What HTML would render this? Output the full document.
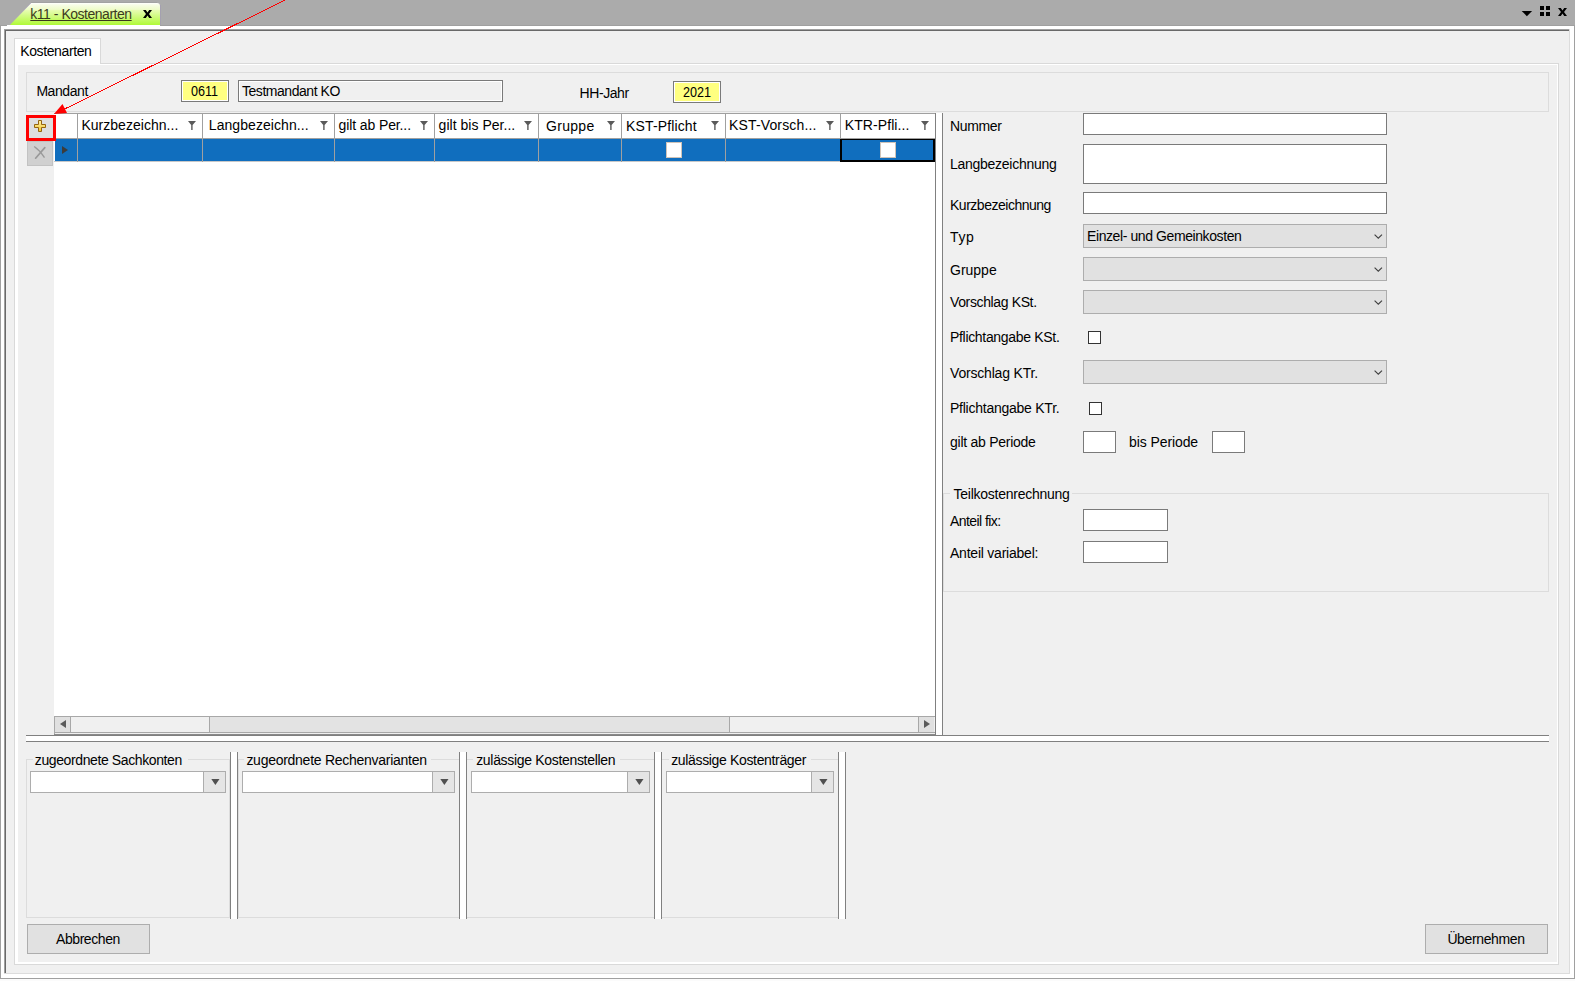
<!DOCTYPE html><html><head><meta charset="utf-8"><style>
html,body{margin:0;padding:0;}
body{width:1575px;height:981px;position:relative;overflow:hidden;background:#ababab;font-family:"Liberation Sans",sans-serif;color:#000;}
body>div{position:absolute;}
.t{position:absolute;white-space:nowrap;line-height:16px;font-size:13.5px;}
</style></head><body>
<div style="left:0px;top:25px;width:1575px;height:956px;background:#a0a0a0"></div>
<div style="left:1px;top:26px;width:1573px;height:953px;background:#fff"></div>
<div style="left:7px;top:25px;width:153px;height:1px;background:#fff"></div>
<div style="left:4px;top:29px;width:2px;height:945px;background:#a0a0a0"></div>
<div style="left:5px;top:30px;width:1px;height:944px;background:#696969"></div>
<div style="left:4px;top:29px;width:1566px;height:1px;background:#a0a0a0"></div>
<div style="left:5px;top:30px;width:1565px;height:1px;background:#696969"></div>
<div style="left:6px;top:31px;width:1563px;height:942px;background:#f0f0f0"></div>
<div style="left:1569px;top:29px;width:1px;height:945px;background:#dcdcdc"></div>
<div style="left:4px;top:973px;width:1566px;height:1px;background:#dcdcdc"></div>
<div style="left:0px;top:978px;width:1575px;height:1px;background:#a0a0a0"></div>
<div style="left:0px;top:979px;width:1575px;height:2px;background:#fbfbfb"></div>
<div style="left:0px;top:25px;width:1px;height:952px;background:#a0a0a0"></div>
<div style="left:1574px;top:25px;width:1px;height:952px;background:#a0a0a0"></div>
<svg style="position:absolute;left:0;top:0" width="170" height="26"><defs><linearGradient id="tg" x1="0" y1="0" x2="0" y2="1"><stop offset="0" stop-color="#ffffff"/><stop offset="0.08" stop-color="#f8fde8"/><stop offset="0.3" stop-color="#eefcc8"/><stop offset="0.34" stop-color="#e6fcb0"/><stop offset="1" stop-color="#b0fa38"/></linearGradient></defs><path d="M9.5,25 L31,3 L157,3 Q160,3 160,6 L160,25 Z" fill="url(#tg)"/><path d="M9.5,25 L31,3" stroke="#a89cc0" stroke-width="0.6" fill="none"/><rect x="160" y="5" width="1" height="20" fill="#a4a0b0"/><rect x="31" y="2" width="126" height="1" fill="#a2a2a2"/></svg>
<div class="t" style="left:30.3px;top:6px;font-size:14px;color:#3c3a1e;text-decoration:underline;letter-spacing:-0.478px;">k11 - Kostenarten</div>
<svg style="position:absolute;left:143px;top:10px" width="9" height="8"><path d="M0,0 L2.8,0 L4.5,2.6 L6.2,0 L9,0 L6,4 L9,8 L6.2,8 L4.5,5.4 L2.8,8 L0,8 L3,4 Z" fill="#000"/></svg>
<svg style="position:absolute;left:1521px;top:11px" width="12" height="6"><path d="M0.7,0 L11.1,0 L5.9,5.2 Z" fill="#000"/></svg>
<div style="left:1540px;top:6px;width:4px;height:4px;background:#000"></div>
<div style="left:1546px;top:6px;width:4px;height:4px;background:#000"></div>
<div style="left:1540px;top:12px;width:4px;height:4px;background:#000"></div>
<div style="left:1546px;top:12px;width:4px;height:4px;background:#000"></div>
<svg style="position:absolute;left:1558px;top:8px" width="9" height="8"><path d="M0,0 L2.8,0 L4.5,2.6 L6.2,0 L9,0 L6,4 L9,8 L6.2,8 L4.5,5.4 L2.8,8 L0,8 L3,4 Z" fill="#000"/></svg>
<div style="left:14px;top:38px;width:87px;height:27px;background:#fff;box-sizing:border-box;border:1px solid #d9d9d9;border-bottom:none"></div>
<div style="left:14px;top:63px;width:1px;height:902px;background:#d9d9d9"></div>
<div style="left:100px;top:63px;width:1459px;height:1px;background:#d9d9d9"></div>
<div style="left:1558px;top:63px;width:1px;height:902px;background:#d9d9d9"></div>
<div style="left:14px;top:964px;width:1545px;height:1px;background:#d9d9d9"></div>
<div style="left:15px;top:64px;width:1543px;height:900px;background:#fff"></div>
<div style="left:18px;top:65px;width:1539px;height:897px;background:#f0f0f0"></div>
<div style="left:15px;top:64px;width:85px;height:1px;background:#fff"></div>
<div class="t" style="left:20.2px;top:43px;font-size:14px;letter-spacing:-0.38px;">Kostenarten</div>
<div style="left:26px;top:72px;width:1523px;height:40px;box-sizing:border-box;border:1px solid #dcdcdc;"></div>
<div class="t" style="left:36.4px;top:83px;font-size:14px;letter-spacing:-0.434px;">Mandant</div>
<div style="left:181px;top:80px;width:48px;height:22px;box-sizing:border-box;border:1px solid #7a7a7a;background:#ffff80;"></div>
<div style="left:182px;top:81px;width:46px;height:20px;box-sizing:border-box;border:1px solid #fff"></div>
<div class="t" style="left:191px;top:83px;font-size:14px;transform:scaleX(0.9);transform-origin:0 0;">0611</div>
<div style="left:238px;top:80px;width:265px;height:22px;box-sizing:border-box;border:1px solid #7a7a7a;background:#f0f0f0;"></div>
<div style="left:239px;top:81px;width:263px;height:20px;box-sizing:border-box;border:1px solid #fff"></div>
<div class="t" style="left:242.0px;top:83px;font-size:14px;letter-spacing:-0.461px;">Testmandant KO</div>
<div class="t" style="left:579.6px;top:85px;font-size:14px;letter-spacing:-0.433px;">HH-Jahr</div>
<div style="left:673px;top:81px;width:48px;height:22px;box-sizing:border-box;border:1px solid #7a7a7a;background:#ffff80;"></div>
<div style="left:674px;top:82px;width:46px;height:20px;box-sizing:border-box;border:1px solid #fff"></div>
<div class="t" style="left:683px;top:84px;font-size:14px;transform:scaleX(0.9);transform-origin:0 0;">2021</div>
<div style="left:54px;top:113px;width:881px;height:622px;background:#fff"></div>
<div style="left:54px;top:113px;width:881px;height:1px;background:#a0a0a0"></div>
<div style="left:54px;top:138px;width:881px;height:1px;background:#a0a0a0"></div>
<div style="left:55px;top:139px;width:880px;height:22px;background:#106ebe"></div>
<div style="left:54px;top:161px;width:881px;height:1px;background:#c8c8c8"></div>
<div style="left:77px;top:114px;width:1px;height:48px;background:#a0a0a0"></div>
<div style="left:202px;top:114px;width:1px;height:48px;background:#a0a0a0"></div>
<div style="left:334px;top:114px;width:1px;height:48px;background:#a0a0a0"></div>
<div style="left:434px;top:114px;width:1px;height:48px;background:#a0a0a0"></div>
<div style="left:538px;top:114px;width:1px;height:48px;background:#a0a0a0"></div>
<div style="left:621px;top:114px;width:1px;height:48px;background:#a0a0a0"></div>
<div style="left:725px;top:114px;width:1px;height:48px;background:#a0a0a0"></div>
<div style="left:840px;top:114px;width:1px;height:48px;background:#a0a0a0"></div>
<div class="t" style="left:81.4px;top:117px;font-size:14px;letter-spacing:0.028px;">Kurzbezeichn...</div>
<svg style="position:absolute;left:188px;top:121px" width="8" height="9"><path d="M0,0 L8,0 L4.6,4 L4.6,9 L3.2,9 L3.2,4 Z" fill="#5a5a5a"/></svg>
<div class="t" style="left:208.8px;top:117px;font-size:14px;letter-spacing:0.071px;">Langbezeichn...</div>
<svg style="position:absolute;left:320px;top:121px" width="8" height="9"><path d="M0,0 L8,0 L4.6,4 L4.6,9 L3.2,9 L3.2,4 Z" fill="#5a5a5a"/></svg>
<div class="t" style="left:338.6px;top:117px;font-size:14px;letter-spacing:-0.116px;">gilt ab Per...</div>
<svg style="position:absolute;left:420px;top:121px" width="8" height="9"><path d="M0,0 L8,0 L4.6,4 L4.6,9 L3.2,9 L3.2,4 Z" fill="#5a5a5a"/></svg>
<div class="t" style="left:438.6px;top:117px;font-size:14px;letter-spacing:0.028px;">gilt bis Per...</div>
<svg style="position:absolute;left:524px;top:121px" width="8" height="9"><path d="M0,0 L8,0 L4.6,4 L4.6,9 L3.2,9 L3.2,4 Z" fill="#5a5a5a"/></svg>
<div class="t" style="left:546px;top:118px;font-size:14px;letter-spacing:0.3px;">Gruppe</div>
<svg style="position:absolute;left:607px;top:121px" width="8" height="9"><path d="M0,0 L8,0 L4.6,4 L4.6,9 L3.2,9 L3.2,4 Z" fill="#5a5a5a"/></svg>
<div class="t" style="left:626.0px;top:118px;font-size:14px;letter-spacing:0.14px;">KST-Pflicht</div>
<svg style="position:absolute;left:711px;top:121px" width="8" height="9"><path d="M0,0 L8,0 L4.6,4 L4.6,9 L3.2,9 L3.2,4 Z" fill="#5a5a5a"/></svg>
<div class="t" style="left:729.0px;top:117px;font-size:14px;letter-spacing:0.15px;">KST-Vorsch...</div>
<svg style="position:absolute;left:826px;top:121px" width="8" height="9"><path d="M0,0 L8,0 L4.6,4 L4.6,9 L3.2,9 L3.2,4 Z" fill="#5a5a5a"/></svg>
<div class="t" style="left:844.8px;top:117px;font-size:14px;letter-spacing:0.08px;">KTR-Pfli...</div>
<svg style="position:absolute;left:921px;top:121px" width="8" height="9"><path d="M0,0 L8,0 L4.6,4 L4.6,9 L3.2,9 L3.2,4 Z" fill="#5a5a5a"/></svg>
<svg style="position:absolute;left:62px;top:146px" width="6" height="8"><path d="M0,0 L6,4 L0,8 Z" fill="#3c3c3c"/></svg>
<div style="left:666px;top:142px;width:16px;height:16px;box-sizing:border-box;border:1px solid #cfc3b8;background:#fff;"></div>
<div style="left:880px;top:142px;width:16px;height:16px;box-sizing:border-box;border:1px solid #cfc3b8;background:#fff;"></div>
<div style="left:840px;top:139px;width:95px;height:23px;box-sizing:border-box;border:2px solid #000;border-top-width:1px"></div>
<div style="left:26px;top:115px;width:30px;height:26px;box-sizing:border-box;border:3px solid #f00;background:#dedede"></div>
<svg style="position:absolute;left:34px;top:120px" width="12" height="12"><defs><linearGradient id="pg" x1="0" y1="0" x2="0" y2="1"><stop offset="0" stop-color="#fff3a8"/><stop offset="1" stop-color="#f2c42c"/></linearGradient></defs><path d="M4.5,0.5 L7.5,0.5 L7.5,4.5 L11.5,4.5 L11.5,7.5 L7.5,7.5 L7.5,11.5 L4.5,11.5 L4.5,7.5 L0.5,7.5 L0.5,4.5 L4.5,4.5 Z" fill="url(#pg)" stroke="#94640e" stroke-width="1" stroke-linejoin="miter"/></svg>
<div style="left:27px;top:141px;width:26px;height:25px;box-sizing:border-box;border:1px solid #c2c2c2;background:#d0d0d0"></div>
<svg style="position:absolute;left:33px;top:145px" width="14" height="15"><path d="M1.2,1.5 Q7,5.5 11.5,12.6" stroke="#999" stroke-width="1.3" fill="none"/><path d="M11.8,2.6 L2.6,13.2" stroke="#999" stroke-width="1.7" stroke-linecap="round" fill="none"/></svg>
<div style="left:54px;top:716px;width:881px;height:18px;background:#f0f0f0"></div>
<div style="left:54px;top:716px;width:881px;height:1px;background:#a8a8a8"></div>
<div style="left:54px;top:732px;width:881px;height:1px;background:#a8a8a8"></div>
<div style="left:54px;top:734px;width:881px;height:1px;background:#8a8a8a"></div>
<div style="left:55px;top:717px;width:15px;height:15px;background:#e0e0e0"></div>
<div style="left:70px;top:717px;width:1px;height:15px;background:#a8a8a8"></div>
<div style="left:54px;top:716px;width:1px;height:18px;background:#a8a8a8"></div>
<svg style="position:absolute;left:60px;top:720px" width="6" height="8"><path d="M6,0 L0,4 L6,8 Z" fill="#5a5a5a"/></svg>
<div style="left:210px;top:717px;width:519px;height:15px;background:#e3e3e3"></div>
<div style="left:209px;top:717px;width:1px;height:15px;background:#a8a8a8"></div>
<div style="left:729px;top:717px;width:1px;height:15px;background:#a8a8a8"></div>
<div style="left:919px;top:717px;width:15px;height:15px;background:#e0e0e0"></div>
<div style="left:918px;top:717px;width:1px;height:15px;background:#a8a8a8"></div>
<svg style="position:absolute;left:924px;top:720px" width="6" height="8"><path d="M0,0 L6,4 L0,8 Z" fill="#5a5a5a"/></svg>
<div style="left:935px;top:113px;width:1px;height:623px;background:#808080"></div>
<div style="left:936px;top:113px;width:6px;height:622px;background:#fff"></div>
<div style="left:942px;top:113px;width:1px;height:623px;background:#808080"></div>
<div style="left:26px;top:735px;width:1523px;height:1px;background:#808080"></div>
<div style="left:26px;top:736px;width:1523px;height:5px;background:#fff"></div>
<div style="left:26px;top:741px;width:1523px;height:1px;background:#808080"></div>
<div class="t" style="left:950.0px;top:118px;font-size:14px;letter-spacing:-0.36px;">Nummer</div>
<div style="left:1083px;top:113px;width:304px;height:22px;box-sizing:border-box;border:1px solid #7a7a7a;background:#fff;"></div>
<div class="t" style="left:950.0px;top:156px;font-size:14px;letter-spacing:-0.272px;">Langbezeichnung</div>
<div style="left:1083px;top:144px;width:304px;height:40px;box-sizing:border-box;border:1px solid #7a7a7a;background:#fff;"></div>
<div class="t" style="left:950.0px;top:197px;font-size:14px;letter-spacing:-0.486px;">Kurzbezeichnung</div>
<div style="left:1083px;top:192px;width:304px;height:22px;box-sizing:border-box;border:1px solid #7a7a7a;background:#fff;"></div>
<div class="t" style="left:950.0px;top:229px;font-size:14px;letter-spacing:0.6px;">Typ</div>
<div style="left:1083px;top:224px;width:304px;height:24px;box-sizing:border-box;border:1px solid #adadad;background:#e1e1e1;"></div>
<svg style="position:absolute;left:1373.8px;top:233.7px" width="10" height="6"><path d="M0.6,0.6 L4.3,4.2 L8,0.6" stroke="#404040" stroke-width="1.15" fill="none"/></svg>
<div class="t" style="left:1087.0px;top:228px;font-size:14px;letter-spacing:-0.408px;">Einzel- und Gemeinkosten</div>
<div class="t" style="left:950px;top:262px;font-size:14px;">Gruppe</div>
<div style="left:1083px;top:257px;width:304px;height:24px;box-sizing:border-box;border:1px solid #adadad;background:#e1e1e1;"></div>
<svg style="position:absolute;left:1373.8px;top:266.7px" width="10" height="6"><path d="M0.6,0.6 L4.3,4.2 L8,0.6" stroke="#404040" stroke-width="1.15" fill="none"/></svg>
<div class="t" style="left:950.0px;top:294px;font-size:14px;letter-spacing:-0.369px;">Vorschlag KSt.</div>
<div style="left:1083px;top:290px;width:304px;height:24px;box-sizing:border-box;border:1px solid #adadad;background:#e1e1e1;"></div>
<svg style="position:absolute;left:1373.8px;top:299.7px" width="10" height="6"><path d="M0.6,0.6 L4.3,4.2 L8,0.6" stroke="#404040" stroke-width="1.15" fill="none"/></svg>
<div class="t" style="left:950.0px;top:329px;font-size:14px;letter-spacing:-0.318px;">Pflichtangabe KSt.</div>
<div style="left:1088px;top:331px;width:13px;height:13px;box-sizing:border-box;border:1px solid #333;background:#fff;"></div>
<div class="t" style="left:950.0px;top:365px;font-size:14px;letter-spacing:-0.184px;">Vorschlag KTr.</div>
<div style="left:1083px;top:360px;width:304px;height:24px;box-sizing:border-box;border:1px solid #adadad;background:#e1e1e1;"></div>
<svg style="position:absolute;left:1373.8px;top:369.7px" width="10" height="6"><path d="M0.6,0.6 L4.3,4.2 L8,0.6" stroke="#404040" stroke-width="1.15" fill="none"/></svg>
<div class="t" style="left:950.0px;top:400px;font-size:14px;letter-spacing:-0.247px;">Pflichtangabe KTr.</div>
<div style="left:1089px;top:402px;width:13px;height:13px;box-sizing:border-box;border:1px solid #333;background:#fff;"></div>
<div class="t" style="left:950.0px;top:434px;font-size:14px;letter-spacing:-0.257px;">gilt ab Periode</div>
<div style="left:1083px;top:431px;width:33px;height:22px;box-sizing:border-box;border:1px solid #7a7a7a;background:#fff;"></div>
<div class="t" style="left:1129.1px;top:434px;font-size:14px;letter-spacing:-0.1px;">bis Periode</div>
<div style="left:1212px;top:431px;width:33px;height:22px;box-sizing:border-box;border:1px solid #7a7a7a;background:#fff;"></div>
<div style="left:943px;top:493px;width:606px;height:99px;box-sizing:border-box;border:1px solid #dcdcdc;"></div>
<div style="left:950px;top:488px;width:122px;height:10px;background:#f0f0f0"></div>
<div class="t" style="left:953.6px;top:486px;font-size:14px;letter-spacing:-0.259px;">Teilkostenrechnung</div>
<div class="t" style="left:950.0px;top:513px;font-size:14px;letter-spacing:-0.56px;">Anteil fix:</div>
<div style="left:1083px;top:509px;width:85px;height:22px;box-sizing:border-box;border:1px solid #7a7a7a;background:#fff;"></div>
<div class="t" style="left:950.0px;top:545px;font-size:14px;letter-spacing:-0.226px;">Anteil variabel:</div>
<div style="left:1083px;top:541px;width:85px;height:22px;box-sizing:border-box;border:1px solid #7a7a7a;background:#fff;"></div>
<div style="left:26px;top:759px;width:204px;height:159px;box-sizing:border-box;border:1px solid #dcdcdc;"></div>
<div style="left:33px;top:755px;width:155px;height:10px;background:#f0f0f0"></div>
<div class="t" style="left:34.8px;top:752px;font-size:14px;letter-spacing:-0.391px;">zugeordnete Sachkonten</div>
<div style="left:30px;top:771px;width:196px;height:22px;box-sizing:border-box;border:1px solid #adadad;background:#fff;"></div>
<div style="left:203px;top:771px;width:23px;height:22px;box-sizing:border-box;border:1px solid #adadad;background:#e5e5e5;"></div>
<svg style="position:absolute;left:210.5px;top:779px" width="9" height="6"><path d="M0.3,0 L8.5,0 L4.4,6 Z" fill="#505050"/></svg>
<div style="left:238px;top:759px;width:222px;height:159px;box-sizing:border-box;border:1px solid #dcdcdc;"></div>
<div style="left:244px;top:755px;width:187px;height:10px;background:#f0f0f0"></div>
<div class="t" style="left:246.4px;top:752px;font-size:14px;letter-spacing:-0.269px;">zugeordnete Rechenvarianten</div>
<div style="left:242px;top:771px;width:213px;height:22px;box-sizing:border-box;border:1px solid #adadad;background:#fff;"></div>
<div style="left:432px;top:771px;width:23px;height:22px;box-sizing:border-box;border:1px solid #adadad;background:#e5e5e5;"></div>
<svg style="position:absolute;left:439.5px;top:779px" width="9" height="6"><path d="M0.3,0 L8.5,0 L4.4,6 Z" fill="#505050"/></svg>
<div style="left:466px;top:759px;width:189px;height:159px;box-sizing:border-box;border:1px solid #dcdcdc;"></div>
<div style="left:473px;top:755px;width:147px;height:10px;background:#f0f0f0"></div>
<div class="t" style="left:476.2px;top:752px;font-size:14px;letter-spacing:-0.318px;">zulässige Kostenstellen</div>
<div style="left:471px;top:771px;width:179px;height:22px;box-sizing:border-box;border:1px solid #adadad;background:#fff;"></div>
<div style="left:627px;top:771px;width:23px;height:22px;box-sizing:border-box;border:1px solid #adadad;background:#e5e5e5;"></div>
<svg style="position:absolute;left:634.5px;top:779px" width="9" height="6"><path d="M0.3,0 L8.5,0 L4.4,6 Z" fill="#505050"/></svg>
<div style="left:661px;top:759px;width:178px;height:159px;box-sizing:border-box;border:1px solid #dcdcdc;"></div>
<div style="left:669px;top:755px;width:142px;height:10px;background:#f0f0f0"></div>
<div class="t" style="left:671.2px;top:752px;font-size:14px;letter-spacing:-0.343px;">zulässige Kostenträger</div>
<div style="left:666px;top:771px;width:168px;height:22px;box-sizing:border-box;border:1px solid #adadad;background:#fff;"></div>
<div style="left:811px;top:771px;width:23px;height:22px;box-sizing:border-box;border:1px solid #adadad;background:#e5e5e5;"></div>
<svg style="position:absolute;left:818.5px;top:779px" width="9" height="6"><path d="M0.3,0 L8.5,0 L4.4,6 Z" fill="#505050"/></svg>
<div style="left:230px;top:752px;width:1px;height:167px;background:#808080"></div>
<div style="left:231px;top:752px;width:6px;height:167px;background:#fff"></div>
<div style="left:237px;top:752px;width:1px;height:167px;background:#808080"></div>
<div style="left:459px;top:752px;width:1px;height:167px;background:#808080"></div>
<div style="left:460px;top:752px;width:6px;height:167px;background:#fff"></div>
<div style="left:466px;top:752px;width:1px;height:167px;background:#808080"></div>
<div style="left:654px;top:752px;width:1px;height:167px;background:#808080"></div>
<div style="left:655px;top:752px;width:6px;height:167px;background:#fff"></div>
<div style="left:661px;top:752px;width:1px;height:167px;background:#808080"></div>
<div style="left:838px;top:752px;width:1px;height:167px;background:#808080"></div>
<div style="left:839px;top:752px;width:6px;height:167px;background:#fff"></div>
<div style="left:845px;top:752px;width:1px;height:167px;background:#808080"></div>
<div style="left:27px;top:924px;width:123px;height:30px;box-sizing:border-box;border:1px solid #adadad;background:#e1e1e1;"></div>
<div class="t" style="left:56.0px;top:931px;font-size:14px;letter-spacing:-0.425px;">Abbrechen</div>
<div style="left:1425px;top:924px;width:123px;height:30px;box-sizing:border-box;border:1px solid #adadad;background:#e1e1e1;"></div>
<div class="t" style="left:1447.4px;top:931px;font-size:14px;letter-spacing:-0.378px;">Übernehmen</div>
<svg style="position:absolute;left:0;top:0" width="300" height="130" shape-rendering="crispEdges"><path d="M64,109.3 L285,0.1" stroke="#f00" stroke-width="1"/></svg>
<svg style="position:absolute;left:0;top:0" width="300" height="130"><path d="M54,114 L62.5,104 L67,113 Z" fill="#f00"/></svg>
</body></html>
